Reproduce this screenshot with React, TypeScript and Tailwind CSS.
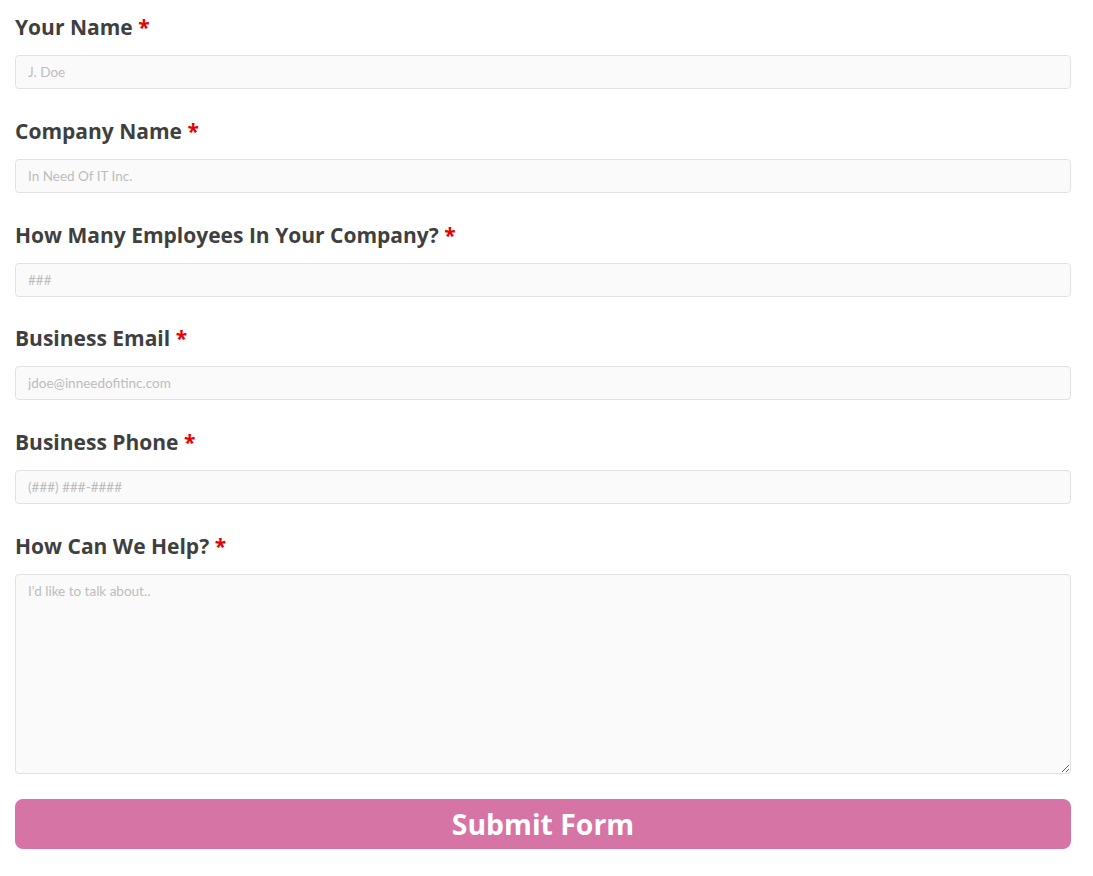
import { useState } from 'react';

const fields = [
  { label: 'Your Name', placeholder: 'J. Doe', type: 'text' },
  { label: 'Company Name', placeholder: 'In Need Of IT Inc.', type: 'text' },
  { label: 'How Many Employees In Your Company?', placeholder: '###', type: 'text' },
  { label: 'Business Email', placeholder: 'jdoe@inneedofitinc.com', type: 'email' },
  { label: 'Business Phone', placeholder: '(###) ###-####', type: 'tel' },
];

function Label({ text }: { text: string }) {
  return (
    <label className="block h-[30px] mb-[13px] text-[21px] leading-[30px] font-bold text-[#3f3f3f]">
      {text} <span className="text-[#e60000]">*</span>
    </label>
  );
}

export default function App() {
  const [message, setMessage] = useState('');

  return (
    <div className="bg-white min-h-screen pl-[15px] pt-3 font-['Open_Sans',sans-serif]">
      <form className="w-[1056px]" onSubmit={(e) => e.preventDefault()}>
        {fields.map((f) => (
          <div key={f.label} className="mb-[26.8px]">
            <Label text={f.label} />
            <input
              type={f.type}
              placeholder={f.placeholder}
              className="block w-full h-[34px] px-3 rounded border border-[#e2e2e2] bg-[#fafafa] text-[13.5px] font-['Lato',sans-serif] text-[#444] placeholder:text-[#bdbdbd] outline-none"
            />
          </div>
        ))}

        <div className="mb-[25px]">
          <Label text="How Can We Help?" />
          <textarea
            value={message}
            onChange={(e) => setMessage(e.target.value)}
            placeholder="I'd like to talk about.."
            className="block w-full h-[200px] px-3 pt-[6px] pb-2 rounded border border-[#e2e2e2] bg-[#fafafa] text-[13.5px] font-['Lato',sans-serif] text-[#444] placeholder:text-[#bdbdbd] outline-none"
          />
        </div>

        <button
          type="submit"
          className="block w-full h-[50px] rounded-lg bg-[#d674a5] text-white text-[28.4px] font-bold leading-none"
        >
          Submit Form
        </button>
      </form>
    </div>
  );
}
